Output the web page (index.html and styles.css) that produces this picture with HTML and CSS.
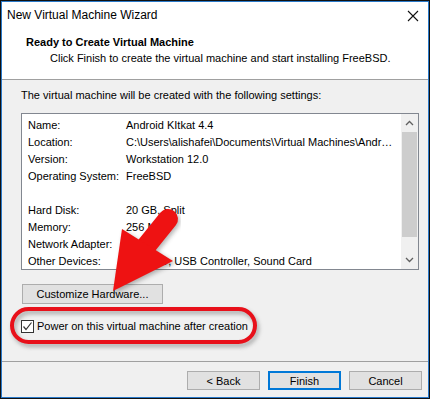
FILE: index.html
```html
<!DOCTYPE html>
<html lang="en">
<head>
    <meta charset="UTF-8">
    <meta name="viewport" content="width=device-width, initial-scale=1.0">
    <title>New Virtual Machine Wizard</title>
    <link rel="stylesheet" href="styles.css">
</head>
<body>
    <div class="window">
        <div class="titlebar">
            <span class="title">New Virtual Machine Wizard</span>
            <svg class="close" width="12" height="12" viewBox="0 0 12 12">
                <path d="M1 1 L11 11 M11 1 L1 11" stroke="#111" stroke-width="1.1" fill="none"/>
            </svg>
        </div>
        <div class="header">
            <h1>Ready to Create Virtual Machine</h1>
            <p>Click Finish to create the virtual machine and start installing FreeBSD.</p>
        </div>
        <div class="content">
            <p class="intro">The virtual machine will be created with the following settings:</p>
            <div class="listbox">
                <div class="rows">
                    <div class="row"><span class="label">Name:</span><span class="value">Android KItkat 4.4</span></div>
                    <div class="row"><span class="label">Location:</span><span class="value">C:\Users\alishafei\Documents\Virtual Machines\Andr…</span></div>
                    <div class="row"><span class="label">Version:</span><span class="value">Workstation 12.0</span></div>
                    <div class="row"><span class="label">Operating System:</span><span class="value">FreeBSD</span></div>
                    <div class="row"></div>
                    <div class="row"><span class="label">Hard Disk:</span><span class="value">20 GB, Split</span></div>
                    <div class="row"><span class="label">Memory:</span><span class="value">256 MB</span></div>
                    <div class="row"><span class="label">Network Adapter:</span><span class="value">NAT</span></div>
                    <div class="row"><span class="label">Other Devices:</span><span class="value">CD/DVD, USB Controller, Sound Card</span></div>
                </div>
                <div class="scrollbar">
                    <div class="arrow">
                        <svg width="9" height="6" viewBox="0 0 9 6"><path d="M1 5 L4.5 1.5 L8 5" stroke="#606060" stroke-width="1.3" fill="none"/></svg>
                    </div>
                    <div class="thumb"></div>
                    <div class="track"></div>
                    <div class="arrow">
                        <svg width="9" height="6" viewBox="0 0 9 6"><path d="M1 1 L4.5 4.5 L8 1" stroke="#606060" stroke-width="1.3" fill="none"/></svg>
                    </div>
                </div>
            </div>
            <button class="btn customize">Customize Hardware...</button>
            <label class="check">
                <span class="box">
                    <svg width="11" height="11" viewBox="0 0 11 11"><path d="M1.5 5.5 L4 8.5 L9.5 1.5" stroke="#333" stroke-width="1.2" fill="none"/></svg>
                </span>
                Power on this virtual machine after creation
            </label>
        </div>
        <div class="footer">
            <button class="btn">&lt; Back</button>
            <button class="btn primary">Finish</button>
            <button class="btn">Cancel</button>
        </div>

        <!-- red annotation drawn over the dialog -->
        <svg class="annotation" width="430" height="399" viewBox="0 0 430 399">
            <defs>
                <filter id="shadow" x="-10%" y="-30%" width="120%" height="160%">
                    <feGaussianBlur stdDeviation="2"/>
                </filter>
            </defs>
            <rect x="14" y="312" width="243" height="33" rx="16.5" fill="none" stroke="#777" stroke-width="4" opacity="0.6" filter="url(#shadow)"/>
            <rect x="12" y="309" width="243" height="33" rx="16.5" fill="none" stroke="#e8101a" stroke-width="4"/>
            <g filter="url(#shadow)" opacity="0.35" transform="translate(2 2)">
                <line x1="143" y1="250" x2="168" y2="219" stroke="#333" stroke-width="20" stroke-linecap="round"/>
                <polygon points="113,291 122,229 173,261" fill="#333"/>
            </g>
            <line x1="143" y1="250" x2="168" y2="219" stroke="#ee1212" stroke-width="20" stroke-linecap="round"/>
            <polygon points="113,291 122,229 173,261" fill="#ee1212"/>
        </svg>
    </div>
</body>
</html>
```

FILE: styles.css
```css
* {
    box-sizing: border-box;
}
body {
    margin: 0;
    font-family: "Liberation Sans", Arial, sans-serif;
    font-size: 11px;
    color: #000;
    background: #fff;
}
.window {
    position: relative;
    width: 430px;
    height: 399px;
    border: 1px solid #111;
    box-shadow: inset 0 0 0 1px #2a79c9;
    display: flex;
    flex-direction: column;
    background: #f0f0f0;
}
.titlebar {
    height: 27px;
    margin: 1px 1px 0;
    background: #fff;
    display: flex;
    align-items: center;
    justify-content: space-between;
    padding: 0 9px 0 5px;
}
.title {
    font-size: 12px;
    line-height: 27px;
}
.header {
    height: 51px;
    margin: 0 1px;
    background: #fff;
    border-bottom: 1px solid #a0a0a0;
    padding-top: 5px;
}
.header h1 {
    margin: 0 0 0 24px;
    font-size: 11px;
    font-weight: bold;
    line-height: 16px;
}
.header p {
    margin: 0 0 0 48px;
    line-height: 17px;
}
.content {
    flex: 1;
    padding: 7px 0 0 19px;
    display: flex;
    flex-direction: column;
    align-items: flex-start;
    border-bottom: 1px solid #a0a0a0;
    margin: 0 1px;
}
.intro {
    margin: 0 0 10px;
    line-height: 16px;
}
.listbox {
    width: 398px;
    height: 157px;
    border: 1px solid #828790;
    background: #fff;
    display: flex;
    overflow: hidden;
}
.rows {
    flex: 1;
    padding: 3px 0 0 6px;
    overflow: hidden;
}
.row {
    height: 17px;
    line-height: 17px;
    display: flex;
    white-space: nowrap;
}
.label {
    width: 98px;
    flex-shrink: 0;
}
.scrollbar {
    width: 17px;
    flex-shrink: 0;
    background: #f0f0f0;
    display: flex;
    flex-direction: column;
}
.scrollbar .arrow {
    height: 18px;
    display: flex;
    align-items: center;
    justify-content: center;
}
.thumb {
    height: 105px;
    margin: 0 1px;
    background: #cdcdcd;
}
.track {
    flex: 1;
}
.btn {
    font-family: inherit;
    font-size: 11px;
    color: #000;
    background: #e1e1e1;
    border: 1px solid #adadad;
    padding: 0;
    height: 19px;
    width: 73px;
}
.customize {
    margin: 14px 0 0 1px;
    width: 141px;
    height: 20px;
}
.check {
    margin-top: 14px;
    display: flex;
    align-items: center;
    line-height: 16px;
    gap: 3px;
}
.box {
    width: 13px;
    height: 13px;
    border: 1px solid #333;
    background: #fff;
    display: flex;
    align-items: center;
    justify-content: center;
}
.footer {
    height: 36px;
    display: flex;
    justify-content: flex-end;
    gap: 8px;
    padding: 9px 7px 0 0;
}
.primary {
    border: 2px solid #0078d7;
}
.annotation {
    position: absolute;
    left: -1px;
    top: -1px;
    pointer-events: none;
}
```
